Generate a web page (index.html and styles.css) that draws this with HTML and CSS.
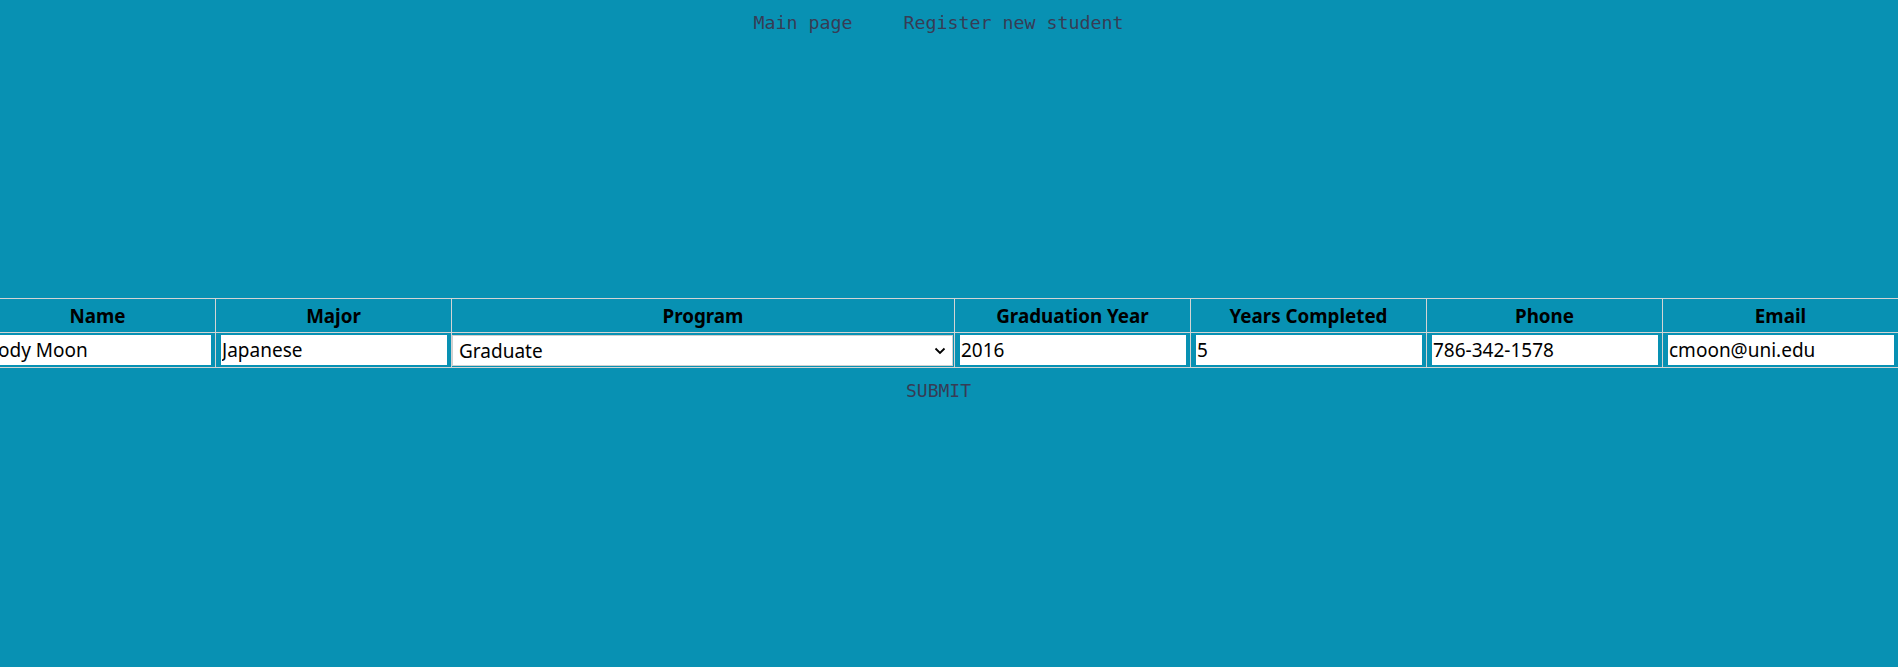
FILE: index.html
```html
<!DOCTYPE html>
<html lang="en">
<head>
<meta charset="utf-8">
<title>Register new student</title>
<link rel="stylesheet" href="styles.css">
</head>
<body>
<div class="page">
  <nav class="nav">
    <a class="nav-link" href="#">Main page</a>
    <a class="nav-link" href="#">Register new student</a>
  </nav>
  <form class="form">
    <table class="grid">
      <colgroup>
        <col class="c-std"><col class="c-std"><col class="c-wide"><col class="c-std"><col class="c-std"><col class="c-std"><col class="c-std">
      </colgroup>
      <thead>
        <tr>
          <th>Name</th><th>Major</th><th>Program</th><th>Graduation Year</th><th>Years Completed</th><th>Phone</th><th>Email</th>
        </tr>
      </thead>
      <tbody>
        <tr>
          <td><input class="field" type="text" value="Cody Moon"></td>
          <td><input class="field" type="text" value="Japanese"></td>
          <td class="cell-select">
            <div class="select-wrap">
              <select class="select"><option>Graduate</option><option>Undergraduate</option></select>
              <svg class="chev" width="12" height="8" viewBox="0 0 12 8"><path d="M1.5 1.5 L6 6 L10.5 1.5" fill="none" stroke="#000" stroke-width="1.8"/></svg>
            </div>
          </td>
          <td><input class="field" type="text" value="2016"></td>
          <td><input class="field" type="text" value="5"></td>
          <td><input class="field" type="text" value="786-342-1578"></td>
          <td><input class="field" type="text" value="cmoon@uni.edu"></td>
        </tr>
      </tbody>
    </table>
    <div class="actions"><button class="submit" type="button">SUBMIT</button></div>
  </form>
</div>
</body>
</html>
```
FILE: styles.css
```css
html, body {
  margin: 0;
  padding: 0;
  background: #0891b3;
  overflow: hidden;
}
.page {
  width: 1919px;
  margin-left: -21px;
}
.nav {
  display: flex;
  justify-content: center;
  gap: 51px;
  padding-top: 12px;
}
.nav-link {
  font-family: "DejaVu Sans Mono", monospace;
  font-size: 18.3px;
  line-height: 22px;
  color: #373c55;
  text-decoration: none;
}
.form {
  margin-top: 264px;
}
.grid {
  width: 1919px;
  border-collapse: collapse;
  table-layout: fixed;
  border-top: 1px solid #d4d4d4;
  border-bottom: 1px solid #d4d4d4;
}
.c-std { width: 236px; }
.c-wide { width: 503px; }
.grid th {
  height: 33px;
  padding: 0;
  border: 1px solid #d4d4d4;
  font-family: "Noto Sans", sans-serif;
  font-size: 18.8px;
  font-weight: 700;
  color: #000;
  text-align: center;
  vertical-align: middle;
}
.grid td {
  height: 32px;
  padding: 1px 4px 1px 5px;
  border: 1px solid #d4d4d4;
  vertical-align: middle;
}
.grid td.cell-select {
  padding: 1px 1px 1px 0;
}
.field {
  display: block;
  box-sizing: border-box;
  width: 100%;
  height: 30px;
  margin: 0;
  padding: 0 1px;
  border: none;
  outline: none;
  background: #fff;
  font-family: "Noto Sans", sans-serif;
  font-size: 19px;
  color: #000;
}
.select-wrap {
  position: relative;
}
.select {
  display: block;
  box-sizing: border-box;
  width: 100%;
  height: 31px;
  margin: 0;
  padding: 2px 6px 0;
  border: 1px solid #cfcfcf;
  border-radius: 0;
  background: #fff;
  -webkit-appearance: none;
  appearance: none;
  font-family: "Noto Sans", sans-serif;
  font-size: 19px;
  color: #000;
}
.chev {
  position: absolute;
  right: 7px;
  top: 12px;
  pointer-events: none;
}
.actions {
  display: flex;
  justify-content: center;
  padding-top: 12px;
}
.submit {
  background: transparent;
  border: none;
  padding: 0;
  font-family: "DejaVu Sans Mono", monospace;
  font-size: 18px;
  line-height: 22px;
  color: #373c55;
}
```
